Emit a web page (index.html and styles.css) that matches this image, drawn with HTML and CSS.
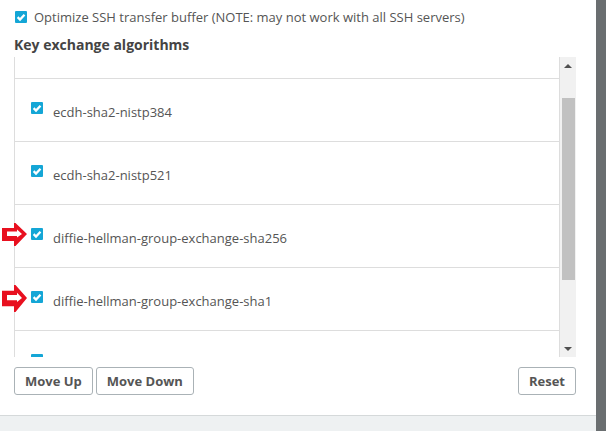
FILE: index.html
```html
<!DOCTYPE html>
<html lang="en">
<head>
<meta charset="utf-8">
<title>Key exchange algorithms</title>
<link rel="stylesheet" href="styles.css">
</head>
<body>
<div class="screen">
  <div class="dialog">
    <div class="body">
      <label class="option">
        <span class="check"><svg viewBox="0 0 12 12"><path d="M2.6 6.2 5 8.5 9.5 3.8" /></svg></span>
        <span>Optimize SSH transfer buffer (NOTE: may not work with all SSH servers)</span>
      </label>
      <h2 class="heading">Key exchange algorithms</h2>
      <div class="list">
        <div class="rows">
          <div class="row row-top"></div>
          <div class="row"><span class="check"><svg viewBox="0 0 12 12"><path d="M2.6 6.2 5 8.5 9.5 3.8" /></svg></span><span class="name">ecdh-sha2-nistp384</span></div>
          <div class="row"><span class="check"><svg viewBox="0 0 12 12"><path d="M2.6 6.2 5 8.5 9.5 3.8" /></svg></span><span class="name">ecdh-sha2-nistp521</span></div>
          <div class="row"><span class="check"><svg viewBox="0 0 12 12"><path d="M2.6 6.2 5 8.5 9.5 3.8" /></svg></span><span class="name">diffie-hellman-group-exchange-sha256</span></div>
          <div class="row"><span class="check"><svg viewBox="0 0 12 12"><path d="M2.6 6.2 5 8.5 9.5 3.8" /></svg></span><span class="name">diffie-hellman-group-exchange-sha1</span></div>
          <div class="row"><span class="check"><svg viewBox="0 0 12 12"><path d="M2.6 6.2 5 8.5 9.5 3.8" /></svg></span></div>
        </div>
        <div class="scrollbar">
          <span class="arrow arrow-up"></span>
          <span class="track"><span class="thumb"></span></span>
          <span class="arrow arrow-down"></span>
        </div>
      </div>
      <div class="actions">
        <button class="btn">Move Up</button>
        <button class="btn">Move Down</button>
        <button class="btn btn-reset">Reset</button>
      </div>
    </div>
    <div class="footer"></div>
  </div>
  <div class="backdrop"></div>
  <svg class="pointer pointer-a" viewBox="0 0 25 23" preserveAspectRatio="none"><path class="pointer-outer" d="M0 5H12V0H13.5L25 11 13.5 23H12V18H0Z" /><path class="pointer-inner" d="M5 8.5H15V6.5L20 11 15 14.5V13H5Z" /></svg>
  <svg class="pointer pointer-b" viewBox="0 0 25 23" preserveAspectRatio="none"><path class="pointer-outer" d="M0 5H12V0H13.5L25 11 13.5 23H12V18H0Z" /><path class="pointer-inner" d="M5 8.5H15V6.5L20 11 15 14.5V13H5Z" /></svg>
</div>
</body>
</html>
```
FILE: styles.css
```css
* { box-sizing: border-box; }
html, body { margin: 0; height: 100%; }
body { font-family: "Open Sans", sans-serif; color: #555; background: #fff; overflow: hidden; }
.screen { position: relative; display: flex; width: 606px; height: 431px; }
.dialog { width: 596px; display: flex; flex-direction: column; background: #fff; }
.body { flex: 1; padding: 8px 20px 0 14px; display: flex; flex-direction: column; }
.backdrop { width: 10px; background: #6a6e70; }
.footer { height: 16px; background: #eef1f2; border-top: 1px solid #d5d9da; }
.option { display: flex; align-items: center; gap: 7px; height: 18px; padding-left: 1px; font-size: 13px; line-height: 18px; }
.check { flex: none; display: block; width: 12px; height: 12px; background: #14a6d6; border-radius: 1px; }
.check svg { display: block; width: 12px; height: 12px; fill: none; stroke: #fff; stroke-width: 2.3; }
.heading { margin: 9px 0 0; font-size: 14px; line-height: 20px; font-weight: 700; color: #444; }
.list { display: flex; height: 300px; margin-top: 2px; border-left: 1px solid #ddd; overflow: hidden; }
.rows { flex: 1; min-width: 0; }
.row { display: flex; align-items: center; gap: 10px; height: 63px; padding: 0 0 0 16px; border-bottom: 1px solid #ddd; }
.row-top { height: 22px; }
.row .check { margin-top: -5px; }
.name { margin-top: 4px; font-size: 13px; line-height: 18px; }
.scrollbar { flex: none; width: 17px; display: flex; flex-direction: column; align-items: center; background: #f1f1f1; border-left: 1px solid #ddd; }
.arrow { flex: none; width: 0; height: 0; border-left: 4px solid transparent; border-right: 4px solid transparent; }
.arrow-up { margin: 7px 0 4px; border-bottom: 4px solid #505050; }
.arrow-down { margin: 5px 0 6px; border-top: 4px solid #505050; }
.track { flex: 1; width: 100%; padding: 26px 1px 62px 2px; display: block; }
.thumb { display: block; height: 100%; background: #c1c1c1; }
.actions { display: flex; gap: 3px; margin-top: 10px; margin-bottom: 20px; }
.btn { height: 28px; padding: 0 10px; font: 700 13px "Open Sans", sans-serif; color: #555; background: #fff; border: 1px solid #aab2b6; border-radius: 3px; }
.btn-reset { margin-left: auto; }
.pointer { position: absolute; left: 2px; width: 25px; }
.pointer-outer { fill: #e8101f; }
.pointer-inner { fill: #fff; }
.pointer-a { top: 223px; height: 23px; }
.pointer-b { top: 285px; height: 27px; }
```
